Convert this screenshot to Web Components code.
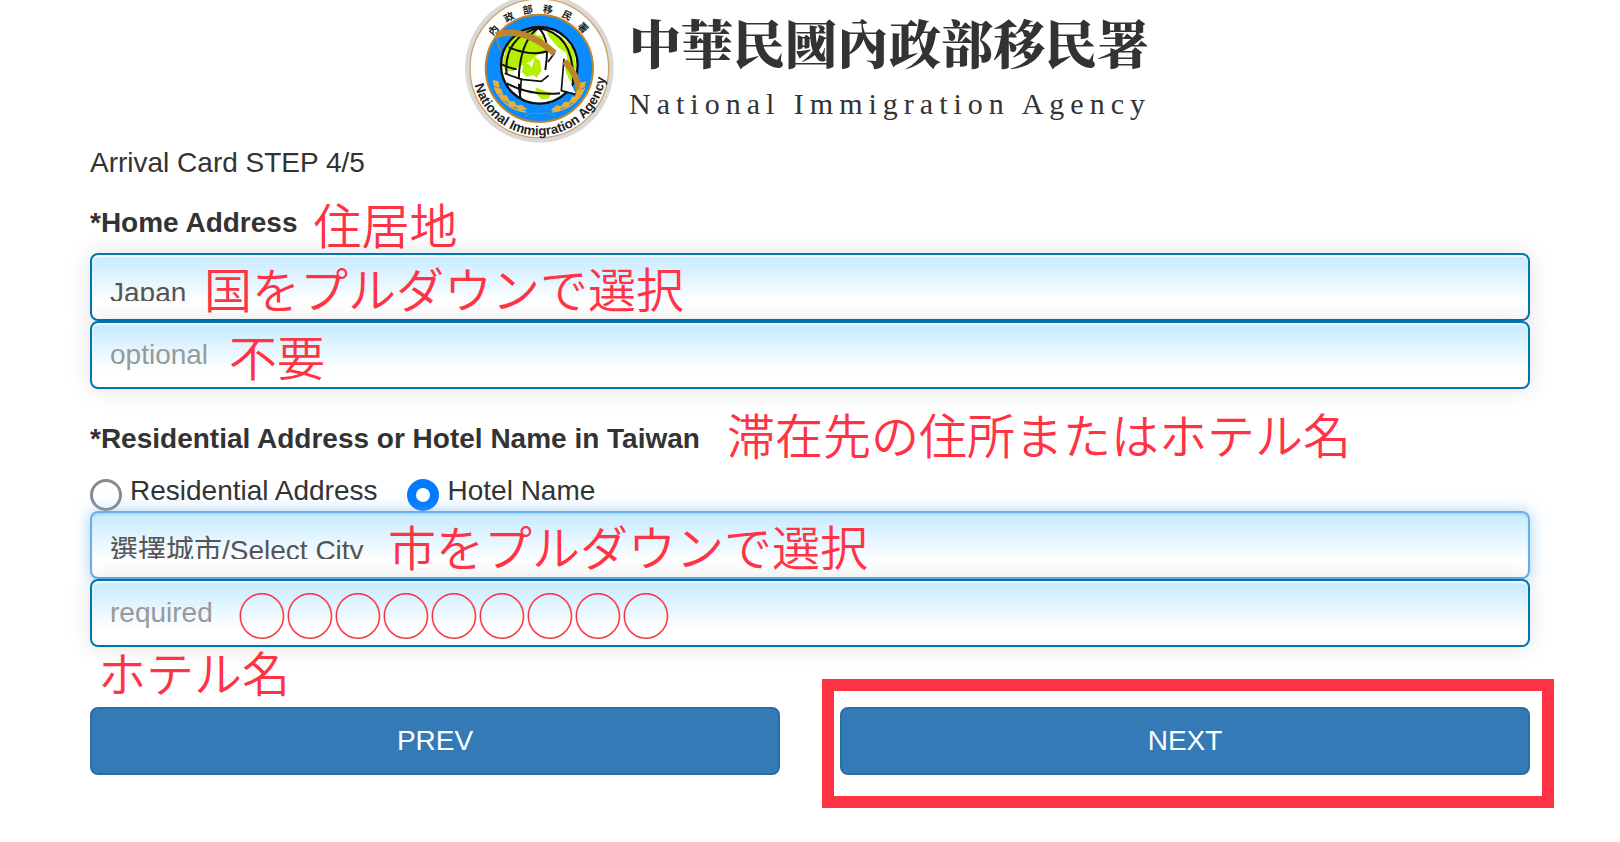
<!DOCTYPE html>
<html lang="en">
<head>
<meta charset="utf-8">
<meta name="viewport" content="width=device-width, initial-scale=1">
<title>Arrival Card</title>
<style>
  body {
    margin: 0;
    background: #fff;
    color: #333;
    font: 28px/40px "Liberation Sans", "Noto Sans CJK TC", sans-serif;
    --note: #ff3344;
    --line: #0076b0;
    --button: #337ab7;
    --button-line: #2e6da4;
  }
</style>
</head>
<body>
<arrival-page>
  <agency-banner slot="banner"></agency-banner>
  <card-section heading="*Home Address" note="住居地" style="--note-gap: 16px; --note-top: -4px">
    <select-field label="Country" value="Japan" note="国をプルダウンで選択" style="--note-start: 114px"></select-field>
    <text-field label="Home address" placeholder="optional" note="不要" style="--note-start: 139px"></text-field>
  </card-section>
  <card-section heading="*Residential Address or Hotel Name in Taiwan" note="滞在先の住所またはホテル名" style="--note-gap: 27px; --note-top: -10px">
    <stay-choice slot="choice"></stay-choice>
    <select-field active label="City" value="選擇城市/Select City" note="市をプルダウンで選択" style="--note-start: 298px"></select-field>
    <text-field label="Hotel name" placeholder="required" note="◯◯◯◯◯◯◯◯◯" style="--note-start: 148px"></text-field>
  </card-section>
  <hand-note>ホテル名</hand-note>
  <step-buttons></step-buttons>
</arrival-page>

<script>
function define(name, html, setup) {
  const template = document.createElement("template")
  template.innerHTML = html

  customElements.define(name, class extends HTMLElement {
    constructor() {
      super()
      this.attachShadow({ mode: "open" }).append(template.content.cloneNode(true))
    }

    connectedCallback() {
      if (setup) setup(this, selector => this.shadowRoot.querySelector(selector))
    }
  })
}

define("hand-note", `
  <style>
    :host {
      display: block;
      color: var(--note);
      font: 350 48px/48px "Noto Sans CJK JP DemiLight", "Noto Sans CJK JP", sans-serif;
      white-space: nowrap;
      pointer-events: none;
    }
  </style>
  <slot></slot>
`)

define("arrival-page", `
  <style>
    :host { display: block; }
    main { padding: 0 90px 60px; }
    p { margin: 0 0 20px; }
    ::slotted(card-section) { margin-bottom: 30px; }
    ::slotted(card-section:last-of-type) { margin-bottom: 0; }
    ::slotted(hand-note) { padding: 0 8px 12px; }
  </style>
  <slot name="banner"></slot>
  <main>
    <p>Arrival Card STEP 4/5</p>
    <slot></slot>
  </main>
`)

define("agency-banner", `
  <style>
    :host {
      display: flex;
      justify-content: center;
      gap: 16px;
      height: 143px;
      padding-right: 4px;
      color: #333;
    }
    svg { display: block; width: 148px; height: 143px; overflow: visible; }
    .words { padding-top: 10px; }
    h1 {
      margin: 0;
      font: 900 52px/64px "Noto Serif CJK TC", "Noto Sans CJK TC", serif;
    }
    p {
      margin: 6px 0 0;
      font: 30px/48px "Liberation Serif", serif;
      letter-spacing: 6px;
    }
  </style>
  <svg viewBox="15 0 444 429" role="img" aria-label="National Immigration Agency emblem">
    <defs>
      <path id="top" d="M100 109A168 168 0 0 1 406 205"/>
      <path id="bottom" d="M44 255A200 200 0 0 0 438 205"/>
      <clipPath id="globe"><circle cx="238" cy="196" r="115"/></clipPath>
    </defs>
    <circle cx="238" cy="205" r="223" fill="#d9d9d9"/>
    <circle cx="238" cy="205" r="208" fill="#fff" stroke="#cfa468" stroke-width="4"/>
    <circle cx="238" cy="205" r="161" fill="#0a8cff" stroke="#bd852d" stroke-width="6"/>
    <g clip-path="url(#globe)">
      <circle cx="238" cy="196" r="116" fill="#fff"/>
      <path fill="#b4f000" d="M126 190l20-70 40-28 48-4-8 16 22 4 10 50-26 6-22 22-30 12-20 16-24 0zM262 94l44 18 34 34 10 60-22-4-10-44-26-18-30-36zM224 172l16 10 4 30-14 22-18-18zM190 188l20 6 14 30-24 6-14-14zM226 262l26 10 22 6-8 18-22 2-14-16zM316 200l32 0-10 44-22 4z"/>
      <path fill="none" stroke="#101010" stroke-width="6" d="M236 84C180 120 166 230 184 306M236 84C266 112 264 160 256 210M236 84C170 98 132 150 140 224M236 84C310 96 346 150 338 260M146 142C190 160 230 168 270 150M126 194C140 200 156 206 170 208M140 250C190 276 240 286 300 280"/>
    </g>
    <circle cx="238" cy="196" r="115" fill="none" stroke="#101010" stroke-width="7"/>
    <path fill="#fff" d="M136 222l48 14 60 8 22-16 0-36 26-42 20 22 2 36 20 44 12 28-40-8-44-4-40-12-44-4-34-14z"/>
    <path fill="none" stroke="#101010" stroke-width="5" d="M134 220l50 18 60 6 22-18M184 234l-4 60M312 176l-8 96 44 12M284 158l-20 28"/>
    <path fill="none" stroke="#bd852d" stroke-width="19" d="M108 106C150 90 216 96 284 160"/>
    <path fill="none" stroke="#bd852d" stroke-width="18" d="M314 184C342 214 362 250 354 292"/>
    <path fill="none" stroke="#bd852d" stroke-width="4" d="M110 102c0 20 4 34 12 50"/>
    <g fill="#e8ae38">
      <path d="M98 240l18 4 2 20-16-6zM104 262l20 4 6 20-20-6zM118 284l22 2 10 20-22-4zM140 304l22 0 12 18-24-2zM164 318l20-4 18 14-22 6z"/>
      <path d="M378 244l-18 4-2 20 16-6zM372 266l-20 4-6 20 20-6zM358 288l-22 2-10 20 22-4zM334 306l-22 0-12 18 24-2zM310 320l-20-4-18 14 22 6z"/>
    </g>
    <path fill="none" stroke="#e8ae38" stroke-width="4" d="M102 262C122 306 154 332 200 336M374 264C354 308 320 332 276 336"/>
    <path fill="none" stroke="#3b9fc8" stroke-width="3" d="M194 350q22-16 44-8 26-10 46 6"/>
    <text font-family="Noto Sans CJK TC, sans-serif" font-weight="700" font-size="30" fill="#222" x="0 57 114 171 228 285"><textPath href="#top">內政部移民署</textPath></text>
    <text font-family="Liberation Sans, sans-serif" font-weight="700" font-size="40" fill="#222"><textPath href="#bottom">National Immigration Agency</textPath></text>
  </svg>
  <div class="words">
    <h1>中華民國內政部移民署</h1>
    <p>National Immigration Agency</p>
  </div>
`)

define("card-section", `
  <style>
    :host { display: block; }
    fieldset { min-width: 0; margin: 0; padding: 0; border: 0; }
    legend { display: flex; gap: var(--note-gap); height: 40px; margin-bottom: 10px; padding: 0; font-weight: 700; }
    hand-note { margin-top: var(--note-top); }
  </style>
  <fieldset>
    <legend><span></span><hand-note></hand-note></legend>
    <slot name="choice"></slot>
    <slot></slot>
  </fieldset>
`, (host, find) => {
  find("span").textContent = host.getAttribute("heading")
  find("hand-note").textContent = host.getAttribute("note")
})

const fieldStyles = `
  <style>
    :host { display: grid; }
    select, input, hand-note { grid-area: 1 / 1; }
    select, input {
      appearance: none;
      box-sizing: border-box;
      width: 100%;
      min-width: 0;
      height: 68px;
      margin: 0;
      padding: 12px 18px;
      border: 2px solid var(--line);
      border-radius: 8px;
      outline: 0;
      background: linear-gradient(#c5eaff, #fff 75%);
      box-shadow: inset 0 2px 1px rgba(255, 255, 255, 0.8), 0 0 24px rgba(0, 0, 0, 0.12);
      color: #555;
      font: inherit;
    }
    /* the short content box cuts the foot of the chosen option */
    select { padding: 18px; }
    :host([active]) select {
      border-color: #66afe9;
      box-shadow: inset 0 2px 2px rgba(0, 0, 0, 0.08), 0 0 16px rgba(102, 175, 233, 0.6);
    }
    input::placeholder { color: #999; opacity: 1; }
    hand-note { align-self: center; justify-self: start; margin-left: var(--note-start); z-index: 1; }
  </style>
`

define("select-field", `
  ${fieldStyles}
  <select><option></option></select>
  <hand-note></hand-note>
`, (host, find) => {
  find("select").setAttribute("aria-label", host.getAttribute("label"))
  find("option").textContent = host.getAttribute("value")
  find("hand-note").textContent = host.getAttribute("note")
})

define("text-field", `
  ${fieldStyles}
  <input type="text">
  <hand-note></hand-note>
`, (host, find) => {
  find("input").setAttribute("aria-label", host.getAttribute("label"))
  find("input").placeholder = host.getAttribute("placeholder")
  find("hand-note").textContent = host.getAttribute("note")
})

define("stay-choice", `
  <style>
    :host { display: flex; gap: 30px; margin-top: 2px; }
    label { display: flex; align-items: flex-start; gap: 8px; }
    input {
      appearance: none;
      box-sizing: border-box;
      width: 32px;
      height: 32px;
      margin: 8px 0 0;
      border: 3px solid #8a8a8f;
      border-radius: 50%;
      background: #fff;
    }
    input:checked { border: 9px solid #007aff; }
  </style>
  <label><input type="radio" name="stay">Residential Address</label>
  <label><input type="radio" name="stay" checked>Hotel Name</label>
`)

define("step-buttons", `
  <style>
    :host { display: grid; grid-template-columns: 1fr 1fr; gap: 60px; }
    div { position: relative; }
    button {
      width: 100%;
      height: 68px;
      padding: 12px 24px;
      border: 2px solid var(--button-line);
      border-radius: 8px;
      background: var(--button);
      color: #fff;
      font: inherit;
    }
    .frame {
      position: absolute;
      inset: -28px -24px -33px -18px;
      border: 12px solid var(--note);
      pointer-events: none;
    }
  </style>
  <div><button type="button">PREV</button></div>
  <div><button type="button">NEXT</button><span class="frame"></span></div>
`)
</script>
</body>
</html>
